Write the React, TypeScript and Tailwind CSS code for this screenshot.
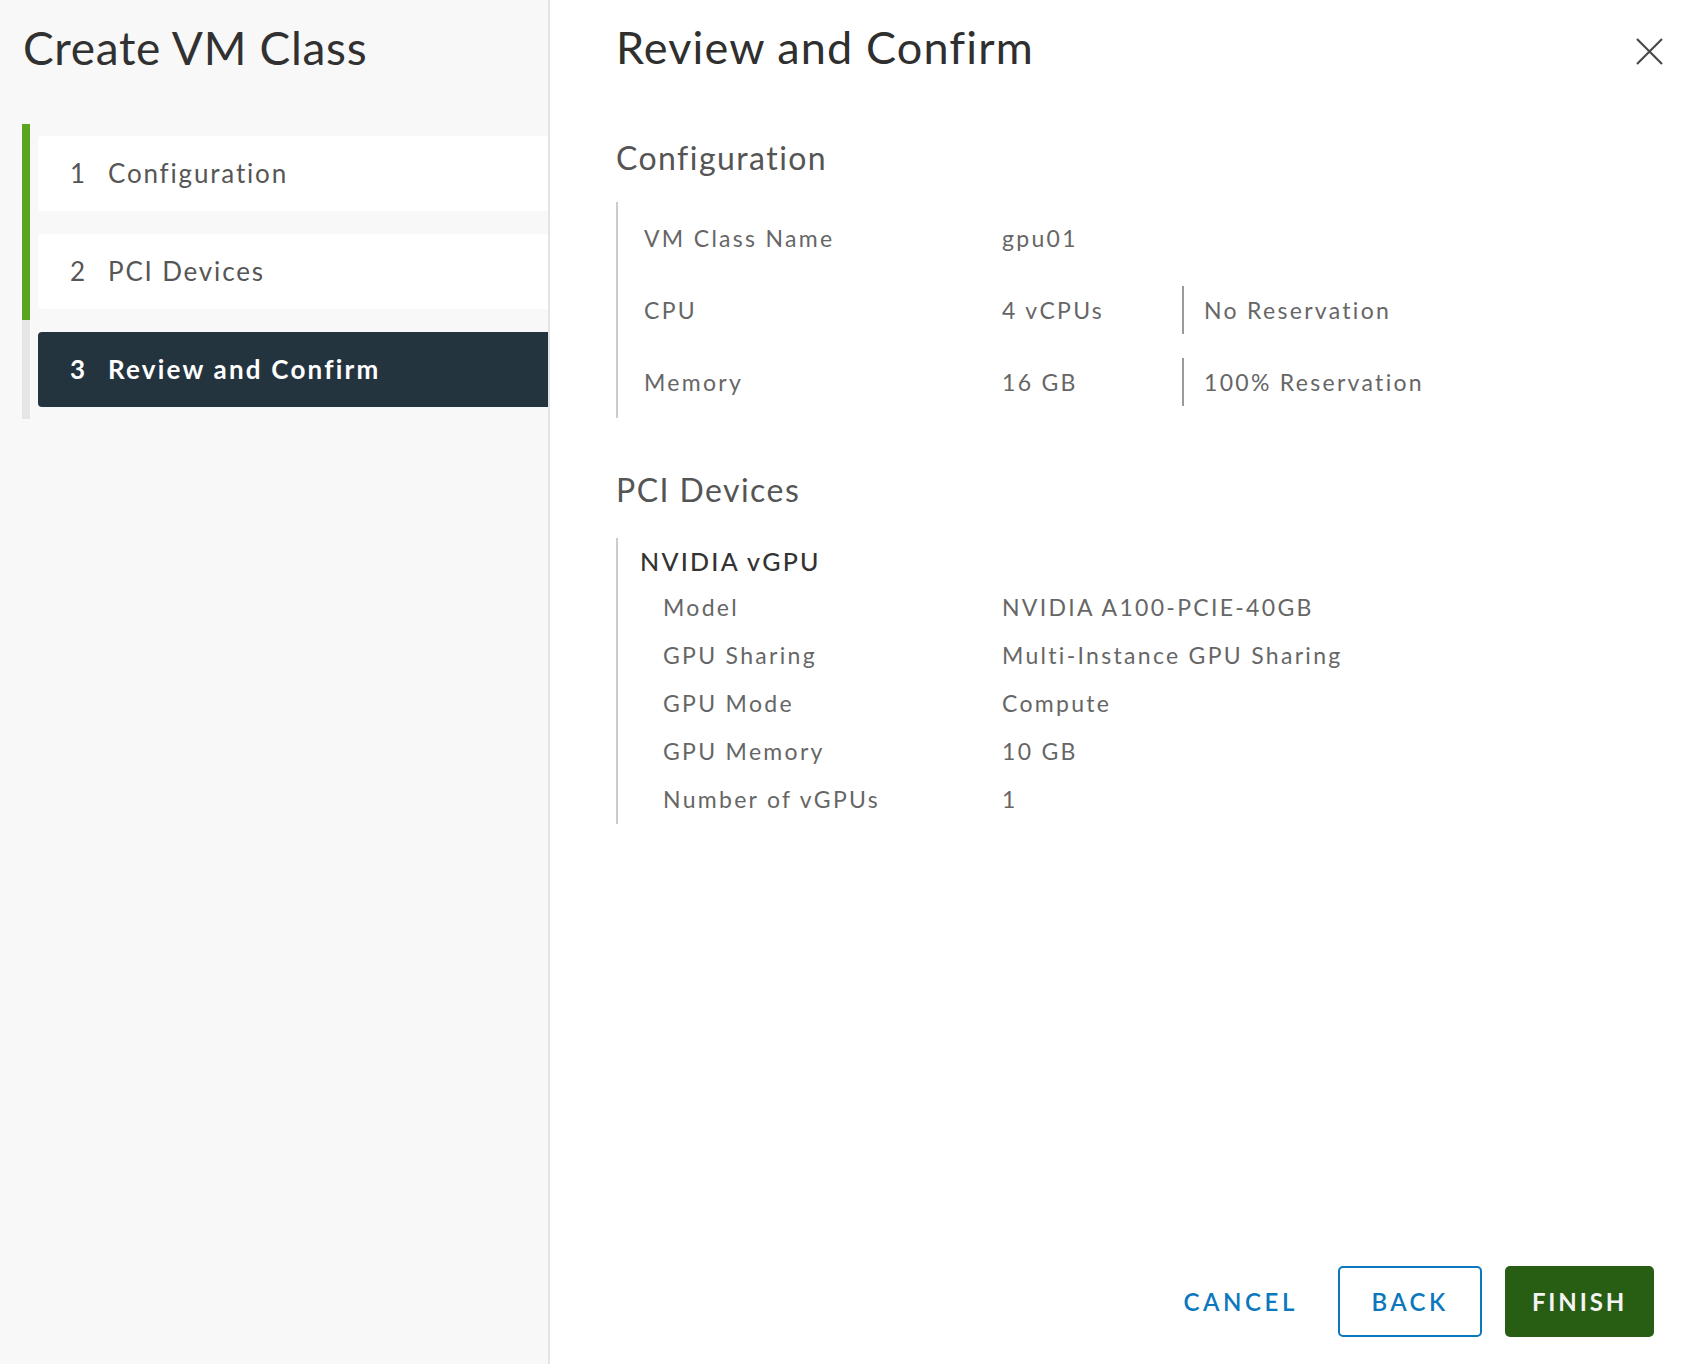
import React from "react";

const steps = [
  { n: "1", label: "Configuration", active: false },
  { n: "2", label: "PCI Devices", active: false },
  { n: "3", label: "Review and Confirm", active: true },
];

const pciRows: [string, string][] = [
  ["Model", "NVIDIA A100-PCIE-40GB"],
  ["GPU Sharing", "Multi-Instance GPU Sharing"],
  ["GPU Mode", "Compute"],
  ["GPU Memory", "10 GB"],
  ["Number of vGPUs", "1"],
];

export default function App() {
  return (
    <div
      className="flex h-[1364px] w-[1690px] overflow-hidden bg-white"
      style={{ fontFamily: "Lato, 'Open Sans', sans-serif" }}
    >
      {/* Sidebar */}
      <aside className="flex w-[550px] shrink-0 flex-col border-r-2 border-[#e4e4e4] bg-[#f8f8f8]">
        <h1 className="pl-[23px] pt-[20px] text-[46px] font-normal leading-[1.2] tracking-[0.015em] text-[#313131]">
          Create VM Class
        </h1>
        <div className="ml-[22px] mt-[49px] flex">
          <div className="flex w-[8px] flex-col">
            <div className="h-[196px] bg-[#5ba41f]" />
            <div className="h-[99px] bg-[#e6e6e6]" />
          </div>
          <div className="flex flex-1 flex-col gap-[23px] py-[12px] pl-[8px]">
            {steps.map((s) => (
              <div
                key={s.n}
                className={
                  s.active
                    ? "flex h-[75px] items-center rounded-l-[4px] bg-[#24343f] pl-[32px] text-[26px] font-bold leading-[1.2] text-white"
                    : "flex h-[75px] items-center rounded-l-[4px] bg-white pl-[32px] text-[26px] leading-[1.2] text-[#565656]"
                }
              >
                <span className="w-[38px]">{s.n}</span>
                <span className={s.active ? "tracking-[0.085em]" : "tracking-[0.07em]"}>{s.label}</span>
              </div>
            ))}
          </div>
        </div>
      </aside>

      {/* Main */}
      <main className="flex flex-1 flex-col pl-[66px] pr-[27px]">
        <div className="flex items-start justify-between pt-[20px]">
          <h2 className="text-[45px] font-normal leading-[1.2] tracking-[0.025em] text-[#2f2f2f]">
            Review and Confirm
          </h2>
          <svg
            className="mt-[18px]"
            width="27"
            height="27"
            viewBox="0 0 27 27"
            fill="none"
            stroke="#4a4a4a"
            strokeWidth="2.2"
          >
            <path d="M1 1L26 26M26 1L1 26" />
          </svg>
        </div>

        <h3 className="mt-[65px] text-[32px] font-normal leading-[1.2] tracking-[0.045em] text-[#555555]">
          Configuration
        </h3>
        <div className="mt-[25px] flex flex-col border-l-2 border-[#cccccc] pl-[26px] text-[23px] leading-[1.2] tracking-[0.1em] text-[#666666]">
          <div className="flex h-[72px] items-center">
            <span className="w-[358px]">VM Class Name</span>
            <span>gpu01</span>
          </div>
          <div className="flex h-[72px] items-center">
            <span className="w-[358px]">CPU</span>
            <span className="w-[180px]">4 vCPUs</span>
            <span className="flex h-[48px] items-center border-l-2 border-[#9a9a9a] pl-[20px]">
              No Reservation
            </span>
          </div>
          <div className="flex h-[72px] items-center">
            <span className="w-[358px]">Memory</span>
            <span className="w-[180px]">16 GB</span>
            <span className="flex h-[48px] items-center border-l-2 border-[#9a9a9a] pl-[20px]">
              100% Reservation
            </span>
          </div>
        </div>

        <h3 className="mt-[53px] text-[32px] font-normal leading-[1.2] tracking-[0.045em] text-[#555555]">
          PCI Devices
        </h3>
        <div className="mt-[28px] flex flex-col border-l-2 border-[#cccccc] pt-[8px]">
          <div className="pl-[22px] text-[25px] font-medium leading-[1.2] tracking-[0.09em] text-[#333333]">
            NVIDIA vGPU
          </div>
          <div className="mt-[8px] flex flex-col pl-[45px] text-[23px] leading-[1.2] tracking-[0.1em] text-[#666666]">
            {pciRows.map(([k, v]) => (
              <div key={k} className="flex h-[48px] items-center">
                <span className="w-[339px]">{k}</span>
                <span>{v}</span>
              </div>
            ))}
          </div>
        </div>

        <div className="flex-1" />

        <div className="flex items-center justify-end gap-[23px] pb-[27px] pr-[9px]">
          <button className="h-[71px] text-[24px] font-semibold tracking-[0.15em] text-[#0b78bd]">
            CANCEL
          </button>
          <button className="ml-[17px] h-[71px] w-[144px] rounded-[5px] border-2 border-[#0b78bd] text-[24px] font-semibold tracking-[0.14em] text-[#0b78bd]">
            BACK
          </button>
          <button className="h-[71px] w-[149px] rounded-[5px] bg-[#285e14] text-[24px] font-bold tracking-[0.12em] text-[#f4f4f4]">
            FINISH
          </button>
        </div>
      </main>
    </div>
  );
}
